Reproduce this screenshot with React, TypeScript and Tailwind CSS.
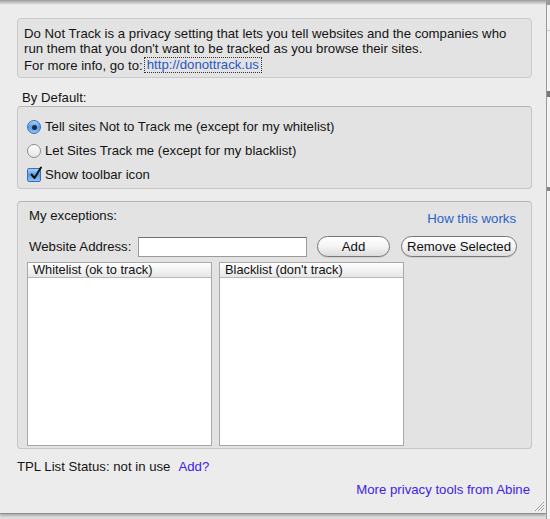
import React from 'react';

const font = { fontFamily: '"Liberation Sans", Arial, sans-serif' };

function Radio({ checked }: { checked?: boolean }) {
  if (checked) {
    return (
      <span className="flex h-[14px] w-[14px] shrink-0 items-center justify-center rounded-full border border-[#3a6fb8] bg-gradient-to-b from-[#a9d0f5] via-[#5b9ce6] to-[#8fc3f5]">
        <span className="h-[5px] w-[5px] rounded-full bg-[#1b2b44]" />
      </span>
    );
  }
  return (
    <span className="h-[14px] w-[14px] shrink-0 rounded-full border border-[#8c8c8c] bg-gradient-to-b from-[#ffffff] to-[#e4e4e4]" />
  );
}

function Checkbox() {
  return (
    <span className="relative flex h-[14px] w-[14px] shrink-0 items-center justify-center rounded-[2px] border border-[#3a6fb8] bg-gradient-to-b from-[#a9d0f5] via-[#5b9ce6] to-[#8fc3f5]">
      <svg width="14" height="14" viewBox="0 0 14 14" className="absolute -top-[3px] left-[1px]">
        <path d="M2.5 8.5 L5.5 12 L12 1.5" fill="none" stroke="#111" strokeWidth="2" strokeLinecap="round" strokeLinejoin="round" />
      </svg>
    </span>
  );
}

function PillButton({ label, width }: { label: string; width: string }) {
  return (
    <button
      className={`${width} h-[21px] shrink-0 rounded-full border border-[#777] bg-gradient-to-b from-[#ffffff] via-[#f4f4f4] to-[#dcdcdc] text-[13.2px] leading-[19px] text-[#111] shadow-[0_1px_0_rgba(0,0,0,0.08)]`}
    >
      {label}
    </button>
  );
}

function ListBox({ title, width }: { title: string; width: string }) {
  return (
    <div className={`${width} h-[184px] shrink-0 border border-[#a8a8a8] bg-white`}>
      <div className="h-[15px] border-b border-[#b8b8b8] bg-gradient-to-b from-[#ffffff] to-[#e6e6e6] pl-[5px] text-[12.8px] leading-[14px] text-[#111]">
        {title}
      </div>
    </div>
  );
}

export default function App() {
  return (
    <div className="flex h-[519px] w-[550px] overflow-hidden bg-[#dedede] text-[13.2px] text-[#141414]" style={font}>
      <div className="flex h-[514px] w-[546px] shrink-0 flex-col border-b border-[#8f8f8f] bg-[#ececec] shadow-[0_1px_3px_rgba(0,0,0,0.35)]">
        <div className="h-[5px] shrink-0 bg-gradient-to-b from-[#9c9c9c] to-[#ececec]" />
        <div className="flex flex-col pl-[17px] pr-[14px] pt-[13px]">
          {/* intro */}
          <div className="h-[60px] rounded-[4px] border border-[#cbcbcb] bg-[#e3e3e3] pl-[6px] pt-[7px] leading-[15px]">
            <div>Do Not Track is a privacy setting that lets you tell websites and the companies who</div>
            <div>run them that you don't want to be tracked as you browse their sites.</div>
            <div className="mt-[1px] flex items-center">
              <span>For more info, go to:</span>
              <span className="ml-[1px] border border-dotted border-[#333] px-[2px] leading-[14px] text-[#2958c4]">http://donottrack.us</span>
            </div>
          </div>

          <div className="mt-[12px] h-[16px] pl-[5px] leading-[16px]">By Default:</div>

          {/* defaults */}
          <div className="flex h-[83px] flex-col rounded-[4px] border border-[#c6c6c6] border-t-[#b4b4b4] bg-[#e3e3e3] pl-[9px] pt-[8px]">
            <label className="flex h-[24px] items-center gap-[4px]">
              <Radio checked />
              <span>Tell sites Not to Track me (except for my whitelist)</span>
            </label>
            <label className="flex h-[24px] items-center gap-[4px]">
              <Radio />
              <span>Let Sites Track me (except for my blacklist)</span>
            </label>
            <label className="flex h-[24px] items-center gap-[4px]">
              <Checkbox />
              <span>Show toolbar icon</span>
            </label>
          </div>

          {/* exceptions */}
          <div className="mt-[12px] flex h-[248px] flex-col rounded-[4px] border border-[#c6c6c6] border-t-[#b4b4b4] bg-[#e3e3e3] pl-[9px] pr-[15px] pt-[6px]">
            <div className="flex h-[16px] items-start justify-between leading-[16px]">
              <span className="pl-[2px]">My exceptions:</span>
              <span className="mt-[3px] text-[#2a62c8]">How this works</span>
            </div>
            <div className="mt-[12px] flex h-[21px] items-center">
              <span className="w-[111px] shrink-0 pl-[2px]">Website Address:</span>
              <input className="h-[20px] w-[169px] shrink-0 border border-[#9a9a9a] border-t-[#6f6f6f] bg-white outline-none" />
              <div className="ml-[10px]">
                <PillButton label="Add" width="w-[73px]" />
              </div>
              <div className="ml-[11px]">
                <PillButton label="Remove Selected" width="w-[116px]" />
              </div>
            </div>
            <div className="mt-[5px] flex gap-[7px]">
              <ListBox title="Whitelist (ok to track)" width="w-[185px]" />
              <ListBox title="Blacklist (don't track)" width="w-[185px]" />
            </div>
          </div>

          <div className="mt-[10px] flex h-[16px] items-center">
            <span>TPL List Status: not in use</span>
            <span className="ml-[8px] text-[#3c22e8]">Add?</span>
          </div>
          <div className="mt-[5px] h-[16px] pr-[2px] text-right text-[#3c22e8]">More privacy tools from Abine</div>
        </div>
        <div className="mt-auto flex justify-end pb-[1px] pr-[1px]">
          <svg width="12" height="12" viewBox="0 0 12 12">
            <path d="M11 2 L2 11 M11 5 L5 11 M11 8 L8 11" stroke="#9a9a9a" strokeWidth="1" />
            <path d="M11 3 L3 11 M11 6 L6 11 M11 9 L9 11" stroke="#ffffff" strokeWidth="1" />
          </svg>
        </div>
      </div>
      <div className="flex h-[519px] flex-1 flex-col border-l border-[#9a9a9a] bg-[#f4f4f4]">
        <div className="h-[5px] bg-[#9c9c9c]" />
        <div className="mt-[25px] h-[1px] bg-[#c8c8c8]" />
        <div className="mt-[60px] h-[6px] bg-[#777]" />
        <div className="mt-[90px] h-[4px] bg-[#888]" />
      </div>
    </div>
  );
}
